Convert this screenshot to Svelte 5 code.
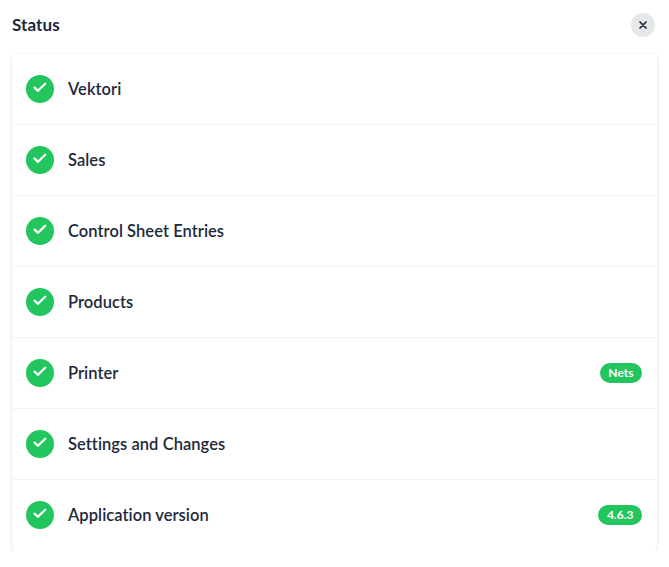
<script>
  const rows = [
    { name: 'Vektori' },
    { name: 'Sales' },
    { name: 'Control Sheet Entries' },
    { name: 'Products' },
    { name: 'Printer', badge: 'Nets' },
    { name: 'Settings and Changes' },
    { name: 'Application version', badge: '4.6.3' }
  ];
</script>

<div class="page">
  <header class="head">
    <h1>Status</h1>
    <button class="close" aria-label="Close">
      <svg width="10" height="10" viewBox="0 0 10 10" fill="none" stroke="#1e293b" stroke-width="1.7" stroke-linecap="round">
        <path d="M2 2l6 6M8 2l-6 6" />
      </svg>
    </button>
  </header>
  <ul class="card">
    {#each rows as row}
      <li class="row">
        <span class="ok">
          <svg width="16" height="14" viewBox="0 0 16 14" fill="none" stroke="#fff" stroke-width="2.3" stroke-linecap="round" stroke-linejoin="round">
            <path d="M2.6 6.6l3.4 3.2L13.2 2.8" />
          </svg>
        </span>
        <span class="name">{row.name}</span>
        {#if row.badge}<span class="badge">{row.badge}</span>{/if}
      </li>
    {/each}
  </ul>
</div>

<style>
  :global(body) { margin: 0; background: #fff; }
  .page {
    padding: 13px 12px 0 12px;
    font-family: Lato, "Noto Sans", sans-serif;
    color: #1e293b;
  }
  .head {
    display: flex;
    align-items: center;
    justify-content: space-between;
    height: 24px;
    margin-bottom: 17px;
  }
  h1 { margin: 0; font-size: 17px; font-weight: 700; line-height: 26px; letter-spacing: .1px; }
  .close {
    width: 24px;
    height: 24px;
    margin-right: 2px;
    padding: 0;
    border: 0;
    border-radius: 50%;
    background: #e5e7eb;
    display: flex;
    align-items: center;
    justify-content: center;
  }
  .card {
    list-style: none;
    margin: 0;
    padding: 0;
    background: #fff;
    border-radius: 4px;
    box-shadow: 0 1px 3px rgba(0,0,0,.14), 0 0 2px rgba(0,0,0,.03);
  }
  .row {
    height: 71px;
    box-sizing: border-box;
    padding: 0 15px 0 14px;
    display: flex;
    align-items: center;
    gap: 14px;
    border-bottom: 1px solid #f3f4f6;
  }
  .row:last-child { border-bottom: 0; height: 70px; }
  .ok {
    width: 28px;
    height: 28px;
    border-radius: 50%;
    background: #22c55e;
    display: flex;
    align-items: center;
    justify-content: center;
    flex: none;
    padding-bottom: 2px;
    box-sizing: border-box;
  }
  .name { flex: 1; font-size: 16.5px; font-weight: 600; letter-spacing: .05px; }
  .badge {
    background: #22c55e;
    color: #fff;
    font-size: 12px;
    font-weight: 700;
    line-height: 20px;
    padding: 0 8.5px;
    border-radius: 10px;
  }
</style>
